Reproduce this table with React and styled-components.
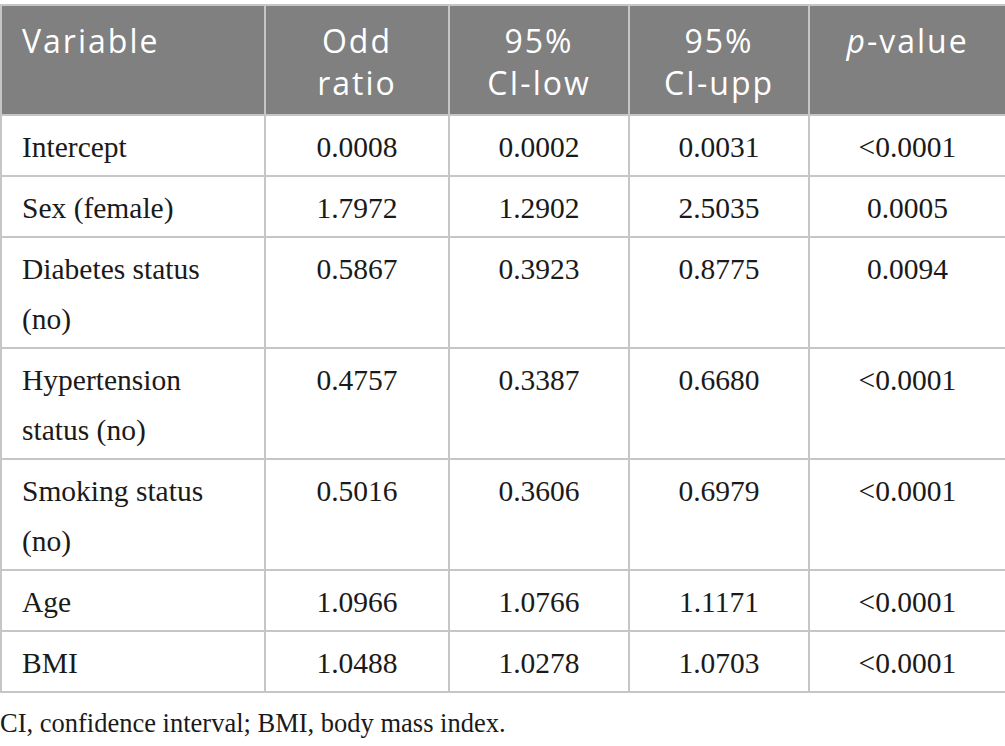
import React from 'react'
import styled, { createGlobalStyle } from 'styled-components'

const GlobalStyle = createGlobalStyle`
  html, body {
    margin: 0;
    padding: 0;
    background: #ffffff;
  }
`

const Page = styled.div`
  width: 1005px;
  padding-top: 4px;
`

const Table = styled.table`
  width: 1005px;
  table-layout: fixed;
  border-collapse: collapse;
  border: 2px solid #c6c6c6;
`

const Col = styled.col`
  width: ${props => props.w}px;
`

const HeadCell = styled.th`
  background: #7f807f;
  color: #ffffff;
  font-family: 'Open Sans', 'Liberation Sans', sans-serif;
  font-weight: 400;
  font-size: 32px;
  letter-spacing: 2px;
  line-height: 42px;
  padding: 14px 20px 10px;
  text-align: ${props => (props.left ? 'left' : 'center')};
  vertical-align: top;
  border: 2px solid #c6c6c6;
  border-top: none;
`

const Cell = styled.td`
  font-family: 'Liberation Serif', 'Times New Roman', serif;
  font-size: 29.5px;
  line-height: 50px;
  color: #1a1a1a;
  padding: 6px 20px 3px;
  text-align: ${props => (props.left ? 'left' : 'center')};
  vertical-align: top;
  border: 2px solid #c6c6c6;
`

const Caption = styled.div`
  margin-top: 15px;
  font-family: 'Liberation Serif', 'Times New Roman', serif;
  font-size: 26.5px;
  line-height: 30px;
  color: #1a1a1a;
`

const rows = [
  ['Intercept', '0.0008', '0.0002', '0.0031', '<0.0001'],
  ['Sex (female)', '1.7972', '1.2902', '2.5035', '0.0005'],
  ['Diabetes status (no)', '0.5867', '0.3923', '0.8775', '0.0094'],
  ['Hypertension status (no)', '0.4757', '0.3387', '0.6680', '<0.0001'],
  ['Smoking status (no)', '0.5016', '0.3606', '0.6979', '<0.0001'],
  ['Age', '1.0966', '1.0766', '1.1171', '<0.0001'],
  ['BMI', '1.0488', '1.0278', '1.0703', '<0.0001']
]

export default function App () {
  return (
    <>
      <GlobalStyle />
      <Page>
        <Table>
          <colgroup>
            <Col w={264} />
            <Col w={184} />
            <Col w={180} />
            <Col w={180} />
            <Col w={197} />
          </colgroup>
          <thead>
            <tr>
              <HeadCell left>Variable</HeadCell>
              <HeadCell>Odd<br />ratio</HeadCell>
              <HeadCell>95%<br />CI-low</HeadCell>
              <HeadCell>95%<br />CI-upp</HeadCell>
              <HeadCell><i>p</i>-value</HeadCell>
            </tr>
          </thead>
          <tbody>
            {rows.map(row => (
              <tr key={row[0]}>
                <Cell left>{row[0]}</Cell>
                {row.slice(1).map((v, i) => (
                  <Cell key={i}>{v}</Cell>
                ))}
              </tr>
            ))}
          </tbody>
        </Table>
        <Caption>CI, confidence interval; BMI, body mass index.</Caption>
      </Page>
    </>
  )
}
